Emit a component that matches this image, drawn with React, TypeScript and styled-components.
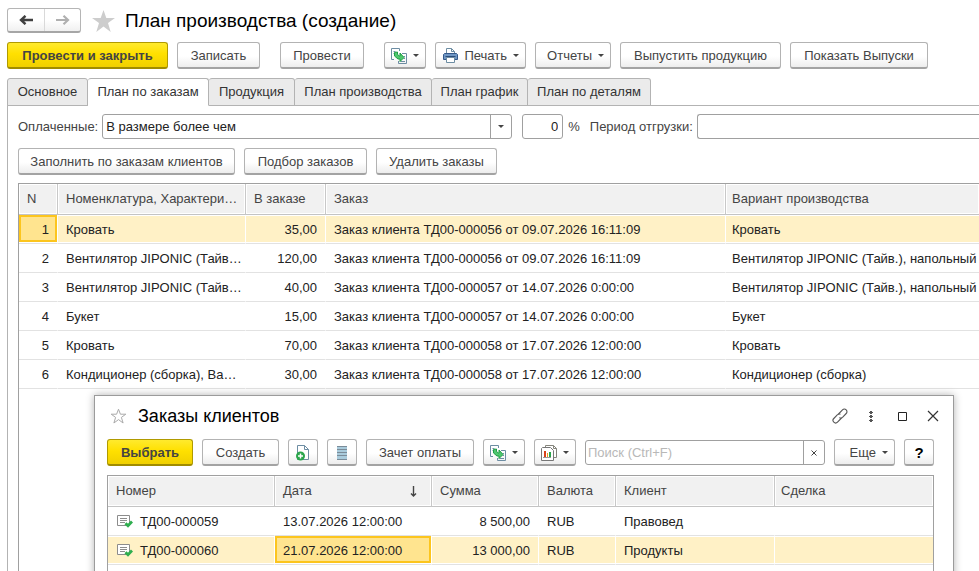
import React from "react";
import styled, { createGlobalStyle, css } from "styled-components";

const GlobalStyle = createGlobalStyle`
  *, *::before, *::after { box-sizing: border-box; }
  body {
    margin: 0;
    background: #fff;
    color: #333;
    font: 13px/16px "Liberation Sans", Arial, sans-serif;
    overflow: hidden;
  }
  button, input, select { font: inherit; color: inherit; margin: 0; }
`;

const Page = styled.main`
  position: relative;
  display: flex;
  flex-direction: column;
  min-height: 100vh;
  padding: 8px 0 0 7px;
  overflow: hidden;
`;

const TitleBar = styled.header`
  display: flex;
  align-items: center;
  height: 25px;
`;

const NavGroup = styled.div`
  display: flex;
  height: 25px;
  border: 1px solid #b5b5b5;
  border-bottom: 2px solid #a6a6a6;
  border-radius: 3px;
  background: linear-gradient(#fff 50%, #f0f0f0);
`;

const NavButton = styled.button`
  display: flex;
  align-items: center;
  justify-content: center;
  width: 36px;
  padding: 0;
  border: 0;
  background: none;
  color: #404040;

  & + & {
    border-left: 1px solid #d9d9d9;
    color: #b0b0b0;
  }
`;

const StarButton = styled.button<{ $small?: boolean }>`
  display: flex;
  padding: 0;
  border: 0;
  background: none;
  margin: ${(p) => (p.$small ? "0 11px 0 0" : "0 10px 0 11px")};
`;

const Title = styled.h1`
  margin: 0;
  color: #000;
  font-size: 19px;
  line-height: 24px;
  font-weight: 400;
`;

const DialogTitle = styled.h2`
  flex: 1;
  margin: 0;
  color: #000;
  font-size: 18px;
  line-height: 24px;
  font-weight: 400;
`;

const Toolbar = styled.div`
  display: flex;
  align-items: center;
  gap: 9px;
`;

const MainToolbar = styled(Toolbar)`
  margin-top: 9px;
`;

const Spacer = styled.span`
  width: 2px;
`;

const Button = styled.button<{ $primary?: boolean; $w: number }>`
  display: flex;
  flex: none;
  align-items: center;
  justify-content: center;
  gap: 6px;
  width: ${(p) => p.$w}px;
  height: 27px;
  padding: 1px 0 0;
  border: 1px solid #b3b3b3;
  border-bottom: 2px solid #a3a3a3;
  border-radius: 3px;
  background: linear-gradient(#fff 55%, #ededed);
  color: #444;
  white-space: nowrap;

  ${(p) =>
    p.$primary &&
    css`
      border-color: #b09a00;
      border-bottom-color: #a08c00;
      background: linear-gradient(#ffea2e, #ffe000 45%, #f0d000);
      font-weight: 700;
    `}
`;

const MenuButton = styled(Button)`
  justify-content: flex-end;
  padding-right: 6px;
`;

const HelpButton = styled(Button)`
  color: #000;
  font-size: 15px;
  font-weight: 700;
`;

const Tabs = styled.nav`
  display: flex;
  margin-top: 9px;
  border-bottom: 1px solid #b3b3b3;
`;

const Tab = styled.a<{ $active?: boolean; $w: number }>`
  width: ${(p) => p.$w}px;
  height: 28px;
  margin-bottom: -1px;
  padding-top: 5px;
  border: 1px solid #b3b3b3;
  border-bottom-color: ${(p) => (p.$active ? "#fff" : "#b3b3b3")};
  border-radius: 3px 3px 0 0;
  background: ${(p) => (p.$active ? "#fff" : "#ebebeb")};
  color: #333;
  text-align: center;
  text-decoration: none;
  white-space: nowrap;

  & + & { border-left-width: 0; }
`;

const Panel = styled.section`
  flex: 1;
  display: flex;
  flex-direction: column;
  padding: 8px 0 0 10px;
  border-left: 1px solid #b3b3b3;
`;

const FilterRow = styled.div`
  display: flex;
  align-items: center;
  white-space: nowrap;
`;

const Label = styled.label`
  color: #444;
  margin-right: 4px;
`;

const fieldBox = css`
  height: 25px;
  border: 1px solid #a0a0a0;
  border-radius: 3px;
  background: #fff;
  color: #222;
`;

const SelectBox = styled.div`
  ${fieldBox}
  display: flex;
  flex: 0 0 410px;
  margin-right: 10px;
`;

const Select = styled.select`
  flex: 1;
  padding: 0 3px;
  border: 0;
  outline: 0;
  background: none;
  appearance: none;
`;

const FieldButton = styled.button`
  display: flex;
  align-items: center;
  justify-content: center;
  width: 21px;
  padding: 0;
  border: 0;
  border-left: 1px solid #a0a0a0;
  background: none;
`;

const PercentInput = styled.input`
  ${fieldBox}
  width: 41px;
  padding: 0 4px;
  text-align: right;
`;

const PercentLabel = styled(Label)`
  margin: 0 10px 0 5px;
`;

const PeriodInput = styled.input`
  ${fieldBox}
  flex: 1;
  min-width: 0;
  border-right: 0;
  border-radius: 3px 0 0 3px;
`;

const PanelToolbar = styled(Toolbar)`
  margin: 9px 0 8px;
`;

const Grid = styled.table<{ $framed?: boolean }>`
  width: 100%;
  table-layout: fixed;
  border-collapse: separate;
  border-spacing: 0;
  border: 1px solid #a0a0a0;
  border-right-width: ${(p) => (p.$framed ? "1px" : "0")};
  border-bottom: 0;
`;

const GridFrame = styled.div`
  flex: 1;
  border-left: 1px solid #a0a0a0;

  & > table { border-left: 0; }
`;

const Col = styled.col<{ $w?: number }>`
  width: ${(p) => (p.$w ? `${p.$w}px` : "auto")};
`;

const Th = styled.th`
  height: 31px;
  padding: 0 0 0 8px;
  border-bottom: 1px solid #c4c4c4;
  border-right: 1px solid #c8c8c8;
  background: #f1f1f1;
  box-shadow: inset 0 0 0 1px #fff;
  color: #444;
  font-weight: 400;
  text-align: left;
  overflow: hidden;
  text-overflow: ellipsis;
  white-space: nowrap;

  &:last-child {
    padding-left: 6px;
    border-right: 0;
  }
`;

const SortHeader = styled.span`
  display: flex;
  justify-content: space-between;
  align-items: center;
  padding-right: 14px;
`;

const Tr = styled.tr<{ $selected?: boolean }>`
  background: ${(p) => (p.$selected ? "#fff1c6" : "#fff")};
`;

const Td = styled.td<{ $right?: boolean; $focus?: boolean }>`
  height: 29px;
  padding: 1px ${(p) => (p.$right ? "8px" : "0")} 0 8px;
  border-bottom: 1px solid #e2e2e2;
  border-right: 1px solid #fff;
  box-shadow: inset 0 1px #fff, inset 0 -1px #fff;
  color: #222;
  text-align: ${(p) => (p.$right ? "right" : "left")};
  overflow: hidden;
  text-overflow: ellipsis;
  white-space: nowrap;

  &:last-child {
    padding-left: 6px;
    border-right: 0;
    text-overflow: clip;
  }

  ${(p) =>
    p.$focus &&
    css`
      background: #ffe48f;
      box-shadow: inset 0 -1px #fff, inset 0 -3px #fcc51e, inset 0 0 0 2px #fcc51e;
    `}
`;

const DocNumber = styled.span`
  display: flex;
  align-items: center;
  gap: 7px;
  padding-left: 1px;
`;

const Dialog = styled.section`
  position: absolute;
  top: 395px;
  left: 94px;
  right: 25px;
  padding: 8px 19px 0 12px;
  border: 1px solid #9b9b9b;
  background: #fff;
  box-shadow: 0 0 8px rgba(0, 0, 0, 0.3);
`;

const DialogHeader = styled.header`
  display: flex;
  align-items: center;
  height: 24px;
  padding-left: 3px;
`;

const WindowTools = styled.div`
  display: flex;
  gap: 15px;
  margin-right: -7px;
`;

const WindowButton = styled.button`
  display: flex;
  padding: 0;
  border: 0;
  background: none;
`;

const DialogToolbar = styled(Toolbar)`
  margin: 11px 0 9px;
`;

const SearchBox = styled.div`
  ${fieldBox}
  display: flex;
  flex: 1;
  min-width: 0;
`;

const SearchInput = styled.input`
  flex: 1;
  min-width: 0;
  padding: 0 2px;
  border: 0;
  outline: 0;
  background: none;

  &::placeholder { color: #b8b8b8; opacity: 1; }
`;

const ArrowLeft = () => (
  <svg width="14" height="10" viewBox="0 0 14 10" fill="none" stroke="currentColor" strokeWidth="2.400">
    <path d="M14 5H2.500M6.500.8L2 5l4.500 4.200" />
  </svg>
);
const ArrowRight = () => (
  <svg width="14" height="10" viewBox="0 0 14 10" fill="none" stroke="currentColor" strokeWidth="2.200">
    <path d="M0 5h11.500M7.500.8L12 5 7.500 9.200" />
  </svg>
);
const StarFilled = () => (
  <svg width="23" height="22" viewBox="0 0 23 22">
    <path fill="#cdcdcd" d="M11.500 0l2.800 8H23l-7 5 2.700 9-7.200-5.400L4.300 22 7 13 0 8h8.700z" />
  </svg>
);
const StarOutline = () => (
  <svg width="17" height="16" viewBox="0 0 17 16" fill="none" stroke="#aaa">
    <path d="M8.500 1.200l1.900 5h5.400l-4.400 3.200 1.700 5.600-4.600-3.400L3.900 15l1.700-5.600L1.200 6.200h5.400z" />
  </svg>
);
const Caret = () => (
  <svg width="6" height="3" viewBox="0 0 6 3">
    <path fill="#444" d="M0 0h6L3 3z" />
  </svg>
);
const TransferIcon = () => (
  <svg width="16" height="16" viewBox="0 0 16 16" fill="none">
    <path stroke="#6d8da3" d="M8.500 3V.5h-8v11H3M2.500 3.500h2M2.500 5.500h1M11 5.500h4.500v10h-8V13M12.500 8.500h1.500M12.500 10.500h1.500M9.500 13.500H14" />
    <path fill="#4fc76f" stroke="#1f9f45" d="M3.500 4.500l3-.5v2.500l2 1.500h.5V5l4 4.500-4 4v-2.500H7L3.500 8z" />
  </svg>
);
const PrinterIcon = () => (
  <svg width="15" height="15" viewBox="0 0 15 15">
    <path fill="#fff" stroke="#6d8da3" d="M3.500 6V.5h5l3 3V6" />
    <path fill="none" stroke="#6d8da3" d="M8.500.5v3h3" />
    <path fill="#6f97c4" stroke="#35598a" d="M1.500 5.500h12l1 1v5h-14v-5z" />
    <path stroke="#2b4c7a" d="M2.500 8.500h10" />
    <path fill="#fff" stroke="#6d8da3" d="M3.500 9.500h8v5h-8z" />
  </svg>
);
const DocPlusIcon = () => (
  <svg width="14" height="16" viewBox="0 0 14 16">
    <path fill="#fff" stroke="#6d8da3" d="M1.500 14.500V.5h7l4 4v10z" />
    <path fill="none" stroke="#6d8da3" d="M8.500.5v4h4" />
    <circle cx="4.500" cy="11" r="4.500" fill="#2aa54b" />
    <path stroke="#fff" strokeWidth="1.500" d="M4.500 8.500v5M2 11h5" />
  </svg>
);
const ListIcon = () => (
  <svg width="10" height="14" viewBox="0 0 10 14">
    <path fill="#a9cbdc" d="M0 0h10v14H0z" />
    <path stroke="#7b8c99" d="M0 .5h10M0 3.500h10M0 6.500h10M0 9.500h10M0 13.500h10" />
  </svg>
);
const ReportsIcon = () => (
  <svg width="16" height="16" viewBox="0 0 16 16" fill="none">
    <path fill="#fff" stroke="#85857c" d="M4.500 2.500v-2h8l3 3v9H13" />
    <path stroke="#85857c" d="M12.500.5v3h3" />
    <path fill="#fff" stroke="#777" d="M.5 3.500l1-1h8l3 3v10H.5z" />
    <path stroke="#d8421c" strokeWidth="2" d="M4 6v6" />
    <path stroke="#e8a01e" d="M6.500 8v4" />
    <path stroke="#2aa54b" strokeWidth="2" d="M9 7v5" />
    <path stroke="#999" d="M2 12.500h8" />
  </svg>
);
const DocCheckIcon = () => (
  <svg width="16" height="13" viewBox="0 0 16 13" fill="none">
    <path fill="#fff" stroke="#8c8c8c" d="M.5.5h12v10H.5z" />
    <path stroke="#8c8c8c" d="M3 3.500h7M3 5.500h7M3 7.500h5" />
    <path stroke="#2fae4f" strokeWidth="2.800" d="M8.500 8.200L11 10.800l4-4.300" />
  </svg>
);
const SortArrow = () => (
  <svg width="7" height="11" viewBox="0 0 7 11" fill="none" stroke="#444" strokeWidth="1.400">
    <path d="M3.500 0v10M1 7.500L3.500 10 6 7.500" />
  </svg>
);
const ClearIcon = () => (
  <svg width="6" height="6" viewBox="0 0 6 6" stroke="#444">
    <path d="M.5.5l5 5M5.500.5l-5 5" />
  </svg>
);
const LinkIcon = () => (
  <svg width="16" height="16" viewBox="0 0 16 16" fill="none" stroke="#555" strokeWidth="1.100">
    <path d="M6 6.500l4.500-4.700a2.600 2.600 0 0 1 3.700 3.700l-3.700 3.800a2.600 2.600 0 0 1-3.200.3M10 9.500l-4.500 4.700a2.600 2.600 0 0 1-3.700-3.700l3.700-3.800a2.600 2.600 0 0 1 3-.4" />
  </svg>
);
const DotsIcon = () => (
  <svg width="16" height="16" viewBox="0 0 16 16" fill="#555">
    <path d="M7 3h2v3H7zM7 7h2v3H7zM7 11h2v3H7z" />
    <path d="M6 4h4v1H6zM6 8h4v1H6zM6 12h4v1H6z" />
  </svg>
);
const MaximizeIcon = () => (
  <svg width="16" height="16" viewBox="0 0 16 16" fill="none" stroke="#222">
    <path d="M4.500 4.500h8v8h-8z" />
  </svg>
);
const CloseIcon = () => (
  <svg width="16" height="16" viewBox="0 0 16 16" fill="none" stroke="#333" strokeWidth="1.200">
    <path d="M3 3l10 10M13 3L3 13" />
  </svg>
);

const tabs: [string, number][] = [
  ["Основное", 81],
  ["План по заказам", 121],
  ["Продукция", 86],
  ["План производства", 137],
  ["План график", 96],
  ["План по деталям", 123],
];

const planRows = [
  ["Кровать", "35,00", "Заказ клиента ТД00-000056 от 09.07.2026 16:11:09", "Кровать"],
  ["Вентилятор JIPONIC (Тайв…", "120,00", "Заказ клиента ТД00-000056 от 09.07.2026 16:11:09", "Вентилятор JIPONIC (Тайв.), напольный"],
  ["Вентилятор JIPONIC (Тайв…", "40,00", "Заказ клиента ТД00-000057 от 14.07.2026 0:00:00", "Вентилятор JIPONIC (Тайв.), напольный"],
  ["Букет", "15,00", "Заказ клиента ТД00-000057 от 14.07.2026 0:00:00", "Букет"],
  ["Кровать", "70,00", "Заказ клиента ТД00-000058 от 17.07.2026 12:00:00", "Кровать"],
  ["Кондиционер (сборка), Ва…", "30,00", "Заказ клиента ТД00-000058 от 17.07.2026 12:00:00", "Кондиционер (сборка)"],
];

const orderRows = [
  ["ТД00-000059", "13.07.2026 12:00:00", "8 500,00", "RUB", "Правовед"],
  ["ТД00-000060", "21.07.2026 12:00:00", "13 000,00", "RUB", "Продукты"],
];

const OrdersDialog = () => (
  <Dialog role="dialog" aria-labelledby="orders-title">
    <DialogHeader>
      <StarButton $small aria-label="Избранное"><StarOutline /></StarButton>
      <DialogTitle id="orders-title">Заказы клиентов</DialogTitle>
      <WindowTools>
        <WindowButton aria-label="Ссылка"><LinkIcon /></WindowButton>
        <WindowButton aria-label="Меню"><DotsIcon /></WindowButton>
        <WindowButton aria-label="Развернуть"><MaximizeIcon /></WindowButton>
        <WindowButton aria-label="Закрыть"><CloseIcon /></WindowButton>
      </WindowTools>
    </DialogHeader>
    <DialogToolbar>
      <Button $primary $w={86}>Выбрать</Button>
      <Button $w={77}>Создать</Button>
      <Button $w={30} aria-label="Скопировать"><DocPlusIcon /></Button>
      <Button $w={30} aria-label="Список"><ListIcon /></Button>
      <Button $w={108}>Зачет оплаты</Button>
      <MenuButton $w={42} aria-label="Создать на основании"><TransferIcon /><Caret /></MenuButton>
      <MenuButton $w={42} aria-label="Отчеты"><ReportsIcon /><Caret /></MenuButton>
      <SearchBox>
        <SearchInput type="text" aria-label="Поиск" placeholder="Поиск (Ctrl+F)" />
        <FieldButton aria-label="Очистить"><ClearIcon /></FieldButton>
      </SearchBox>
      <MenuButton $w={61}>Еще<Caret /></MenuButton>
      <HelpButton $w={30}>?</HelpButton>
    </DialogToolbar>
    <Grid $framed>
      <colgroup>
        <Col $w={167} /><Col $w={157} /><Col $w={107} /><Col $w={77} /><Col $w={159} /><Col />
      </colgroup>
      <thead>
        <tr>
          <Th>Номер</Th>
          <Th><SortHeader>Дата<SortArrow /></SortHeader></Th>
          <Th>Сумма</Th>
          <Th>Валюта</Th>
          <Th>Клиент</Th>
          <Th>Сделка</Th>
        </tr>
      </thead>
      <tbody>
        {orderRows.map(([num, date, sum, currency, client], i) => (
          <Tr key={num} $selected={i === 1}>
            <Td><DocNumber><DocCheckIcon />{num}</DocNumber></Td>
            <Td $focus={i === 1}>{date}</Td>
            <Td $right>{sum}</Td>
            <Td>{currency}</Td>
            <Td>{client}</Td>
            <Td />
          </Tr>
        ))}
        <Tr><Td /><Td /><Td /><Td /><Td /><Td /></Tr>
      </tbody>
    </Grid>
  </Dialog>
);

export default function App() {
  return (
    <Page>
      <GlobalStyle />
      <TitleBar>
        <NavGroup>
          <NavButton aria-label="Назад"><ArrowLeft /></NavButton>
          <NavButton aria-label="Вперед"><ArrowRight /></NavButton>
        </NavGroup>
        <StarButton aria-label="Избранное"><StarFilled /></StarButton>
        <Title>План производства (создание)</Title>
      </TitleBar>
      <MainToolbar>
        <Button $primary $w={161}>Провести и закрыть</Button>
        <Button $w={83}>Записать</Button>
        <Spacer />
        <Button $w={84}>Провести</Button>
        <Spacer />
        <MenuButton $w={42} aria-label="Создать на основании"><TransferIcon /><Caret /></MenuButton>
        <MenuButton $w={91}><PrinterIcon />Печать<Caret /></MenuButton>
        <MenuButton $w={76}>Отчеты<Caret /></MenuButton>
        <Button $w={161}>Выпустить продукцию</Button>
        <Button $w={138}>Показать Выпуски</Button>
      </MainToolbar>
      <Tabs>
        {tabs.map(([name, width], i) => (
          <Tab key={name} href="#" $w={width} $active={i === 1}>{name}</Tab>
        ))}
      </Tabs>
      <Panel>
        <FilterRow>
          <Label htmlFor="paid">Оплаченные:</Label>
          <SelectBox>
            <Select id="paid"><option>В размере более чем</option></Select>
            <FieldButton aria-label="Открыть список"><Caret /></FieldButton>
          </SelectBox>
          <PercentInput id="percent" type="text" defaultValue="0" />
          <PercentLabel htmlFor="percent">%</PercentLabel>
          <Label htmlFor="period">Период отгрузки:</Label>
          <PeriodInput id="period" type="text" />
        </FilterRow>
        <PanelToolbar>
          <Button $w={217}>Заполнить по заказам клиентов</Button>
          <Button $w={123}>Подбор заказов</Button>
          <Button $w={121}>Удалить заказы</Button>
        </PanelToolbar>
        <GridFrame>
          <Grid>
            <colgroup>
              <Col $w={39} /><Col $w={188} /><Col $w={80} /><Col $w={400} /><Col />
            </colgroup>
            <thead>
              <tr>
                <Th>N</Th>
                <Th>Номенклатура, Характери…</Th>
                <Th>В заказе</Th>
                <Th>Заказ</Th>
                <Th>Вариант производства</Th>
              </tr>
            </thead>
            <tbody>
              {planRows.map(([item, qty, order, variant], i) => (
                <Tr key={i} $selected={i === 0}>
                  <Td $right $focus={i === 0}>{i + 1}</Td>
                  <Td>{item}</Td>
                  <Td $right>{qty}</Td>
                  <Td>{order}</Td>
                  <Td>{variant}</Td>
                </Tr>
              ))}
            </tbody>
          </Grid>
        </GridFrame>
      </Panel>
      <OrdersDialog />
    </Page>
  );
}
